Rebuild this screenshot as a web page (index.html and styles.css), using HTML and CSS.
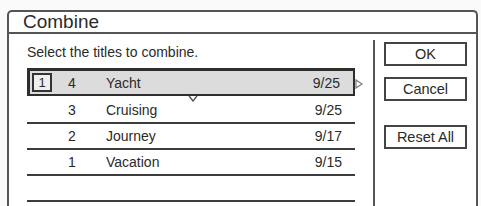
FILE: index.html
```html
<!DOCTYPE html>
<html lang="en">
<head>
    <meta charset="UTF-8">
    <title>Combine</title>
    <link rel="stylesheet" href="styles.css">
</head>
<body>
    <div class="dialog">
        <div class="dialog-title">Combine</div>
        <div class="dialog-body">
            <div class="list-panel">
                <div class="hint">Select the titles to combine.</div>
                <div class="title-list">
                    <div class="row selected">
                        <span class="order">1</span>
                        <span class="num">4</span>
                        <span class="name">Yacht</span>
                        <span class="date">9/25</span>
                        <svg class="arrow-right" width="8" height="10" viewBox="0 0 8 10">
                            <path d="M1 1 L7 5 L1 9 Z" fill="#fff" stroke="#777" stroke-width="1.2"/>
                        </svg>
                        <svg class="arrow-down" width="10" height="7" viewBox="0 0 10 7">
                            <path d="M1 1 L5 6 L9 1" fill="#fff" stroke="#555" stroke-width="1.4"/>
                        </svg>
                    </div>
                    <div class="row">
                        <span class="order"></span>
                        <span class="num">3</span>
                        <span class="name">Cruising</span>
                        <span class="date">9/25</span>
                    </div>
                    <div class="row">
                        <span class="order"></span>
                        <span class="num">2</span>
                        <span class="name">Journey</span>
                        <span class="date">9/17</span>
                    </div>
                    <div class="row">
                        <span class="order"></span>
                        <span class="num">1</span>
                        <span class="name">Vacation</span>
                        <span class="date">9/15</span>
                    </div>
                    <div class="row empty"></div>
                </div>
            </div>
            <div class="button-panel">
                <button class="btn btn-ok">OK</button>
                <button class="btn btn-cancel">Cancel</button>
                <button class="btn btn-reset">Reset All</button>
            </div>
        </div>
    </div>
</body>
</html>
```

FILE: styles.css
```css
body {
    margin: 0;
    background: #fafafa;
    font-family: 'Liberation Sans', Arial, sans-serif;
    color: #2a2a2a;
    overflow: hidden;
}
.dialog {
    display: flex;
    flex-direction: column;
    margin: 10px 3px 0 7px;
    height: 194px;
    background: #fff;
    border: 2px solid #555;
    border-bottom: none;
    border-radius: 5px 5px 0 0;
}
.dialog-title {
    height: 20px;
    line-height: 20px;
    padding-left: 14px;
    font-size: 19px;
    border-bottom: 2px solid #555;
}
.dialog-body {
    display: flex;
    flex: 1;
}
.list-panel {
    width: 328px;
    padding: 0 18px;
}
.hint {
    margin-top: 10px;
    line-height: 16px;
    font-size: 14px;
}
.title-list {
    margin-top: 8px;
}
.row {
    position: relative;
    display: grid;
    grid-template-columns: 20px 40px 1fr auto;
    align-items: center;
    height: 24px;
    padding: 0 13px 0 5px;
    border-bottom: 2px solid #3c3c3c;
    font-size: 14px;
}
.row.selected {
    height: 23px;
    padding-left: 2px;
    background: #dcdcdc;
    border: 2px solid #2e2e2e;
    border-top-width: 3px;
    border-left-width: 3px;
    margin-bottom: 2px;
}
.order {
    height: 15px;
    line-height: 15px;
    text-align: center;
    font-size: 13px;
}
.selected .order {
    border: 2px solid #333;
    background: #eee;
}
.num {
    text-align: center;
}
.name {
    padding-left: 14px;
}
.date {
    text-align: right;
}
.arrow-right {
    position: absolute;
    right: -10px;
    top: 8px;
}
.arrow-down {
    position: absolute;
    left: 158px;
    bottom: -8px;
}
.button-panel {
    display: flex;
    flex-direction: column;
    margin-top: 6px;
    padding: 2px 0 0 9px;
    border-left: 2px solid #555;
}
.btn {
    width: 83px;
    height: 24px;
    padding: 0;
    background: #fff;
    border: 2px solid #444;
    border-radius: 0;
    font-family: 'Liberation Sans', Arial, sans-serif;
    font-size: 14.5px;
    color: #2a2a2a;
}
.btn-cancel {
    margin-top: 11px;
}
.btn-reset {
    margin-top: 24px;
}
```
